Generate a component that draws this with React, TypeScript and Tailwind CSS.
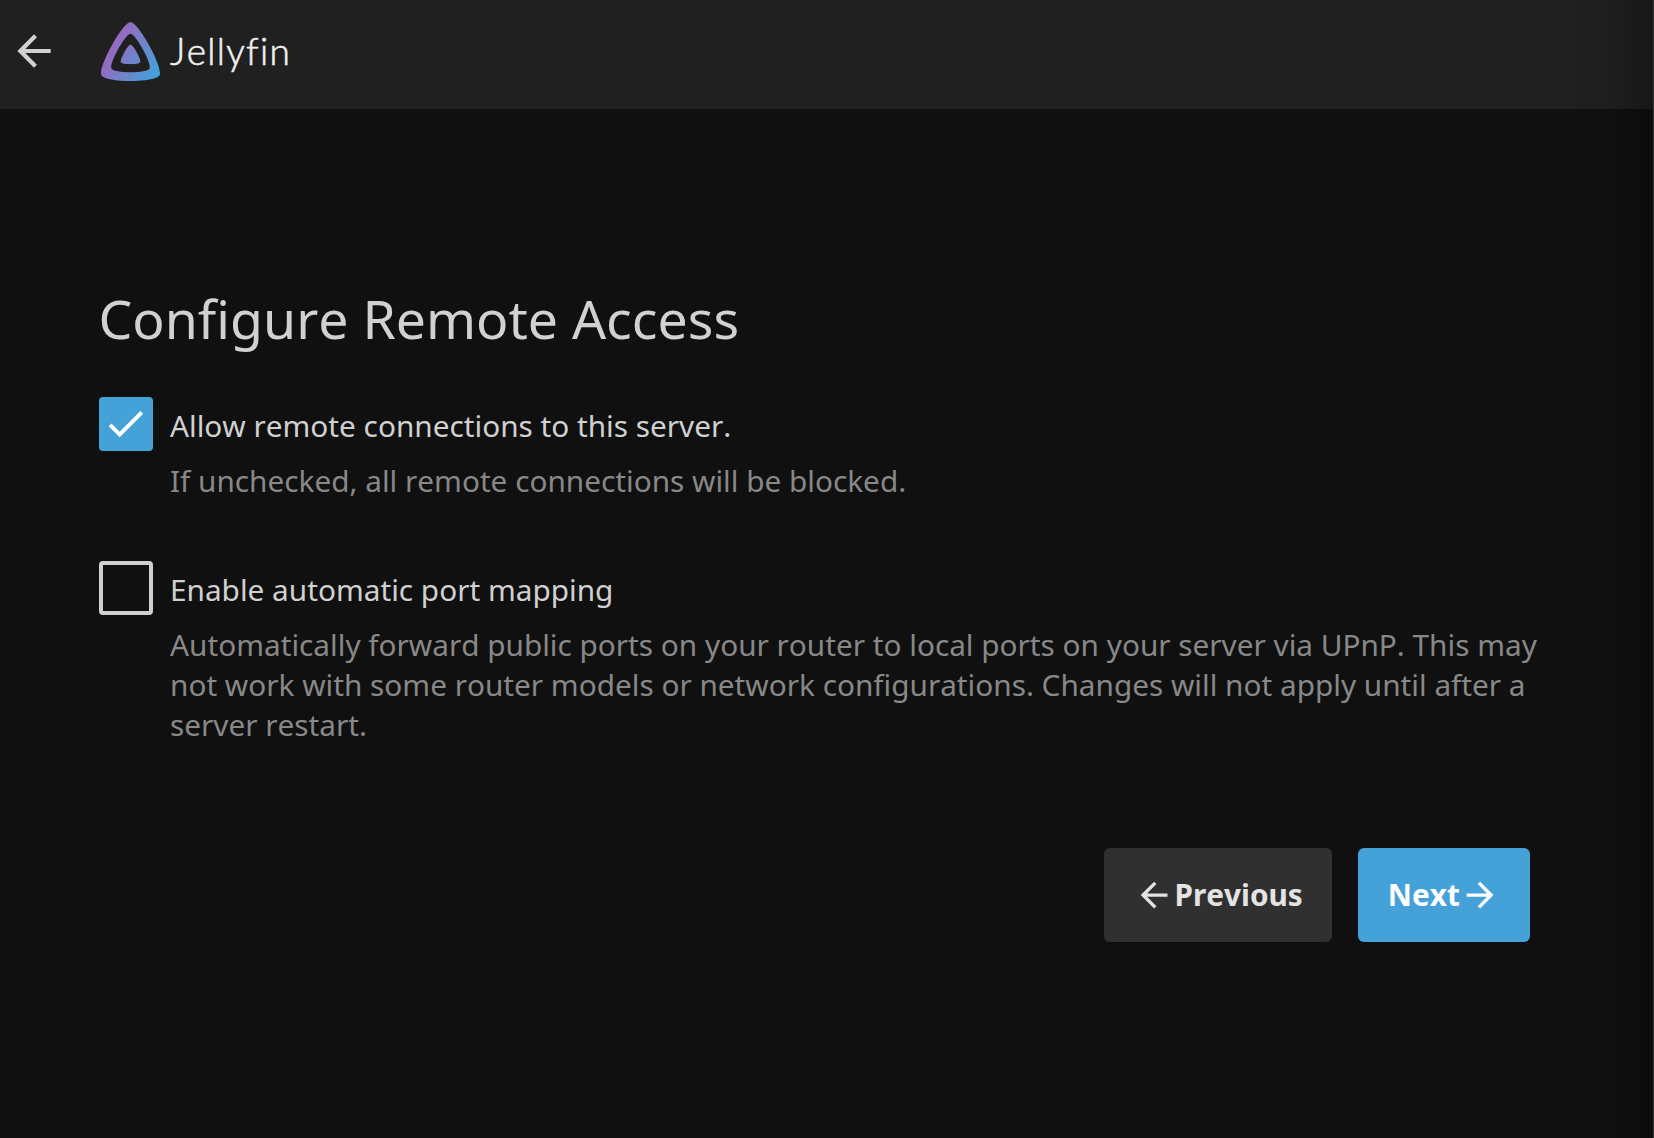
import React from "react";

const BACK = "M20 11H7.83l5.59-5.59L12 4l-8 8 8 8 1.41-1.41L7.83 13H20v-2z";
const FORWARD = "M12 4l-1.41 1.41L16.17 11H4v2h12.17l-5.58 5.59L12 20l8-8z";
const CHECK = "M9 16.17L4.83 12l-1.42 1.41L9 19 21 7l-1.41-1.41z";

function Icon({ d, className }: { d: string; className: string }) {
  return (
    <svg viewBox="0 0 24 24" fill="currentColor" className={className} aria-hidden="true">
      <path d={d} />
    </svg>
  );
}

function Logo() {
  return (
    <svg viewBox="56 56 400 400" className="size-[59px] shrink-0" aria-hidden="true">
      <defs>
        <linearGradient id="jf" gradientUnits="userSpaceOnUse" x1="104" y1="206" x2="438" y2="399">
          <stop offset="0" stopColor="#a063be" />
          <stop offset="1" stopColor="#43a2d9" />
        </linearGradient>
      </defs>
      <path
        fill="url(#jf)"
        d="M190.56 329.07c8.63 17.3 122.4 17.12 130.93 0 8.52-17.1-47.9-119.78-65.46-119.8-17.57 0-74.1 102.5-65.47 119.8z"
      />
      <path
        fill="url(#jf)"
        fillRule="evenodd"
        d="M58.75 417.03c25.97 52.15 368.86 51.55 394.55 0S308.93 56.08 256.03 56.08c-52.92 0-223.25 308.8-197.28 360.95zm68.04-45.25c-17.02-34.17 94.6-236.5 129.26-236.5 34.67 0 146.1 202.7 129.26 236.5-16.83 33.8-241.5 34.17-258.52 0z"
      />
    </svg>
  );
}

function Option({ checked, label, children }: { checked?: boolean; label: string; children: React.ReactNode }) {
  return (
    <div className="grid grid-cols-[54px_1fr] gap-x-[17px]">
      <span
        role="checkbox"
        aria-checked={!!checked}
        className={
          checked
            ? "flex size-[54px] items-start rounded-[4px] bg-[#45a2d8] pl-[3px] pt-[2.5px] text-white"
            : "size-[54px] rounded-[4px] border-4 border-[#d0d0d0]"
        }
      >
        {checked && <Icon d={CHECK} className="size-[47px]" />}
      </span>
      <label className="pt-[9px] text-[#d1d1d1]">{label}</label>
      <p className="col-start-2 pt-[10px] text-[#888888]">{children}</p>
    </div>
  );
}

export default function App() {
  return (
    <div className="relative flex h-[1138px] w-full flex-col overflow-hidden bg-[#101010] font-['Noto_Sans',sans-serif] text-[29.75px] leading-[40px] [font-kerning:none]">
      <header className="flex h-[109px] shrink-0 items-start bg-[#202020] pl-[9px]">
        <button className="mt-[26px] text-[#d1d1d1]" aria-label="Back">
          <Icon d={BACK} className="size-[50px]" />
        </button>
        <div className="ml-[42px] mt-[22px] flex items-start text-[#f0f0f0]">
          <Logo />
          <span className="ml-[10px] mt-[9px] font-['Lato',sans-serif] text-[37px] font-light tracking-[1.3px] [-webkit-text-stroke:0.6px_#f0f0f0]">
            Jellyfin
          </span>
        </div>
      </header>
      <main className="flex flex-col pl-[99px] pr-[110px] pt-[174px]">
        <h1 className="-ml-[0.5px] text-[53.57px] leading-[72px] text-[#d1d1d1]">Configure Remote Access</h1>
        <form className="mt-[42px] flex flex-col gap-[60px]">
          <Option checked label="Allow remote connections to this server.">
            If unchecked, all remote connections will be blocked.
          </Option>
          <Option label="Enable automatic port mapping">
            Automatically forward public ports on your router to local ports on your server via UPnP. This may not work
            with some router models or network configurations. Changes will not apply until after a server restart.
          </Option>
        </form>
        <div className="mr-[14px] mt-[103px] flex justify-end gap-[26px] font-bold">
          <button className="flex h-[94px] w-[228px] items-center rounded-[6px] bg-[#303030] pl-[30px] text-[#e3e3e3]">
            <Icon d={BACK} className="size-[40.2px]" />
            <span className="ml-[0.3px]">Previous</span>
          </button>
          <button className="flex h-[94px] w-[172px] items-center rounded-[6px] bg-[#45a2d8] pl-[29.76px] text-white">
            <span>Next</span>
            <Icon d={FORWARD} className="size-[40.2px]" />
          </button>
        </div>
      </main>
      <div className="pointer-events-none absolute inset-y-0 right-0 w-[90px] border-r border-[#363632] bg-linear-to-r from-transparent via-black/7 to-black/28" />
    </div>
  );
}
